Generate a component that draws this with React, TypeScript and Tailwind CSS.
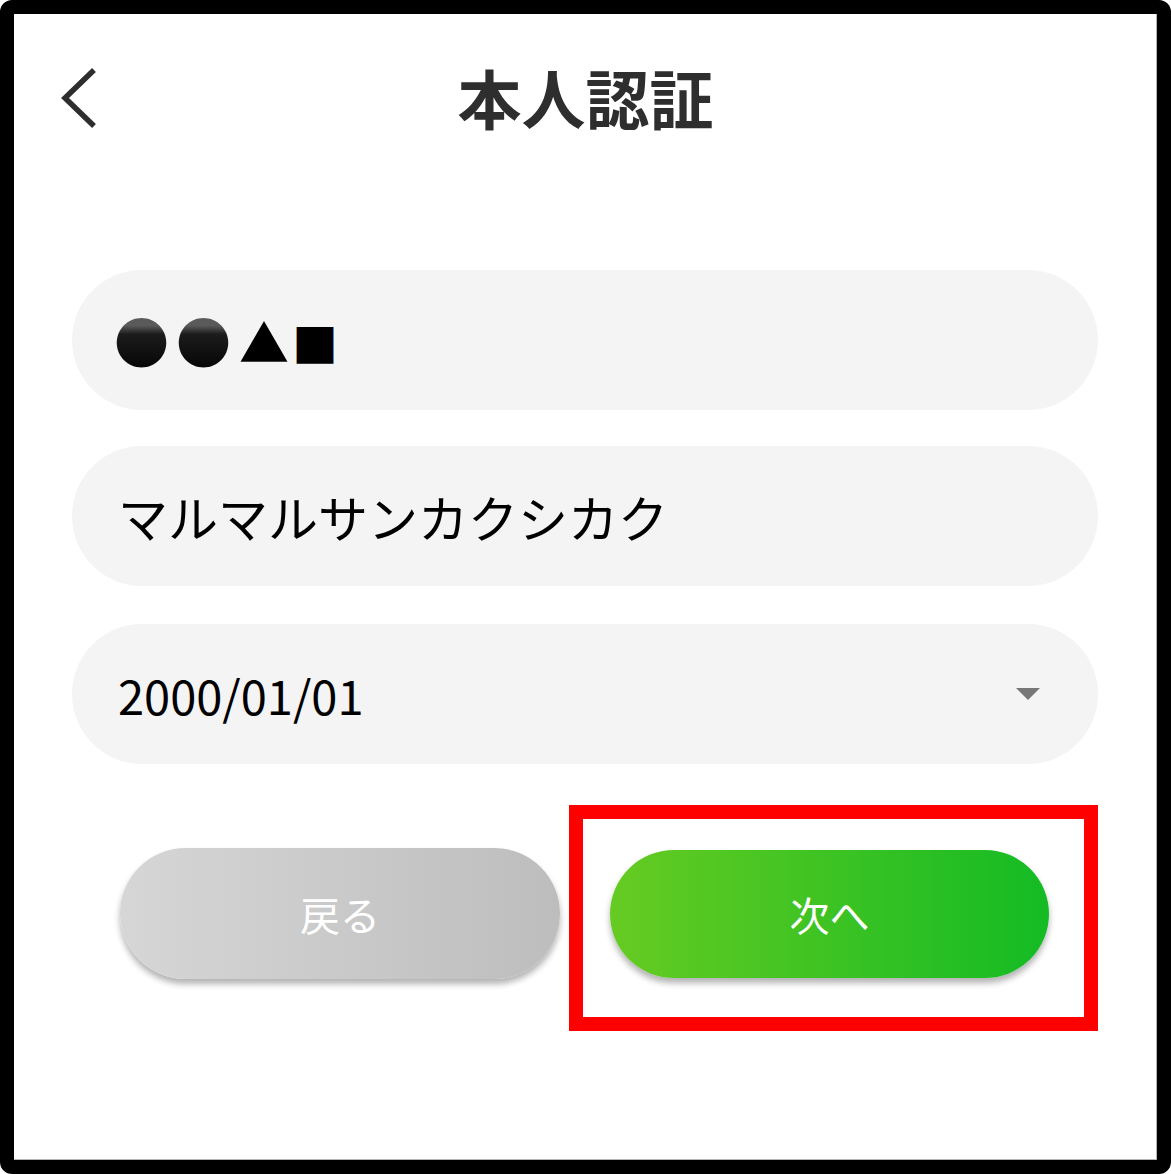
import React from "react";

const jp = "font-['Noto_Sans_CJK_JP','Noto_Sans',sans-serif]";

function BackIcon() {
  return (
    <svg width="40" height="62" viewBox="0 0 40 62" fill="none">
      <polyline
        points="33,3 4,31 33,59"
        stroke="#2e2e2e"
        strokeWidth="5.5"
        strokeLinecap="butt"
        strokeLinejoin="miter"
      />
    </svg>
  );
}

function Field({ children, caret, className = "" }: { children: React.ReactNode; caret?: boolean; className?: string }) {
  return (
    <div className={`flex h-[140px] w-[1026px] items-center justify-between rounded-full bg-[#f4f4f4] pl-[46px] pr-[58px] ${className}`}>
      <div className={`${jp} leading-none text-black`}>{children}</div>
      {caret && (
        <svg width="24" height="12" viewBox="0 0 24 12">
          <polygon points="0,0 24,0 12,12" fill="#777777" />
        </svg>
      )}
    </div>
  );
}

const ball =
  "leading-[1.3] bg-[linear-gradient(to_bottom,#5a5a5a_30%,#1c1c1c_42%,#000_100%)] bg-clip-text text-transparent";

export default function App() {
  return (
    <div className="h-[1174px] w-[1171px] rounded-[12px] border-[14px] border-black bg-white">
      <div className="h-full w-full shadow-[inset_-1px_-1px_0_#b4b4b4]">
        {/* header */}
        <div className="box-content grid h-[120px] grid-cols-[1fr_auto_1fr] items-center pt-[22px]">
          <div className="pl-[47px] pt-[4px]">
            <BackIcon />
          </div>
          <h1 className={`${jp} text-[64px] font-bold leading-none text-[#2e2e2e]`}>本人認証</h1>
          <div />
        </div>

        {/* form */}
        <div className="mt-[114px] flex flex-col gap-[36px] pl-[58px]">
          <Field>
            <span className="-ml-[4px] flex h-[50px] items-center">
              <span className={`text-[55px] ${ball}`}>●</span>
              <span className={`ml-[7px] text-[55px] ${ball}`}>●</span>
              <span className="ml-[8px] text-[50px]">▲</span>
              <span className="ml-[3px] mt-[4px] text-[46px]">■</span>
            </span>
          </Field>
          <Field>
            <span className="text-[50px]">マルマルサンカクシカク</span>
          </Field>
          <Field caret className="mt-[2px]">
            <span className="text-[47px]">2000/01/01</span>
          </Field>
        </div>

        {/* buttons */}
        <div className="mt-[41px] flex items-start pl-[106px]">
          <button className="mt-[43px] flex h-[131px] w-[440px] items-center justify-center rounded-full bg-[linear-gradient(to_right,#d6d6d6,#bdbdbd)] shadow-[0_5px_6px_rgba(0,0,0,0.3)]">
            <span className={`${jp} text-[40px] leading-none text-white`}>戻る</span>
          </button>
          <div className="ml-[9px] h-[226px] w-[529px] border-[14px] border-[#ff0000] pl-[27px] pt-[31px]">
            <button className="flex h-[128px] w-[439px] items-center justify-center rounded-full bg-[linear-gradient(to_right,#66cb22,#14bb24)] shadow-[0_5px_6px_rgba(0,0,0,0.3)]">
              <span className={`${jp} text-[40px] leading-none text-white`}>次へ</span>
            </button>
          </div>
        </div>
      </div>
    </div>
  );
}
